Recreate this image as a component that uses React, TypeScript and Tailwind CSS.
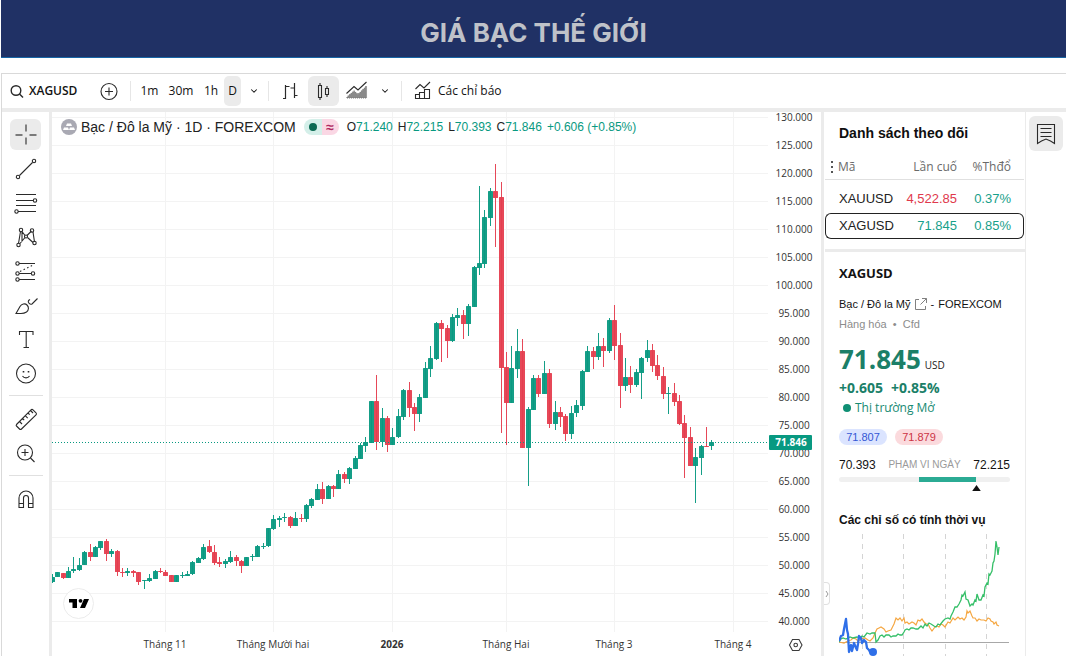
import type { ReactNode } from "react";
import clsx from "clsx";
import { ChevronDown } from "lucide-react";

const UP = "#089981";
const DOWN = "#e53e4f";

// [direction, high, body top, body bottom, low] on the pane's y scale
type Candle = [0 | 1, number, number, number, number];

const candles: Candle[] = [
    [1, 574, 577, 582, 583], [1, 572, 572, 577, 577], [0, 573, 573, 578, 579], [1, 567, 571, 578, 578],
    [1, 557, 569, 571, 573], [1, 558, 565, 570, 571], [1, 551, 552, 565, 565], [0, 544, 552, 557, 561],
    [1, 546, 547, 557, 557], [1, 541, 541, 548, 550], [0, 539, 541, 554, 561], [1, 549, 551, 554, 557],
    [0, 550, 551, 572, 576], [0, 568, 572, 573, 577], [1, 568, 571, 573, 576], [0, 570, 571, 573, 577],
    [0, 572, 572, 582, 585], [1, 580, 580, 581, 589], [1, 574, 578, 581, 582], [1, 570, 571, 579, 579],
    [0, 568, 571, 572, 573], [0, 570, 572, 576, 576], [0, 575, 575, 582, 582], [1, 575, 575, 582, 582],
    [1, 572, 575, 576, 578], [1, 571, 574, 576, 576], [1, 561, 562, 574, 575], [1, 557, 558, 563, 563],
    [1, 544, 547, 559, 560], [0, 540, 546, 552, 553], [0, 545, 552, 563, 565], [0, 557, 562, 564, 567],
    [1, 559, 561, 564, 568], [1, 551, 557, 562, 563], [0, 555, 557, 561, 566], [0, 560, 561, 566, 573],
    [1, 557, 557, 566, 566], [1, 554, 556, 557, 561], [1, 545, 546, 557, 557], [1, 543, 546, 547, 549],
    [1, 528, 528, 546, 547], [1, 515, 519, 529, 530], [1, 516, 518, 520, 527], [1, 513, 517, 518, 522],
    [0, 516, 517, 526, 528], [1, 512, 518, 526, 526], [0, 514, 518, 519, 522], [1, 504, 505, 519, 522],
    [1, 498, 499, 506, 508], [1, 484, 489, 500, 500], [0, 482, 489, 499, 504], [1, 485, 486, 499, 499],
    [0, 485, 486, 489, 497], [1, 470, 474, 489, 489], [0, 472, 474, 479, 483], [1, 467, 468, 479, 484],
    [1, 456, 458, 469, 469], [1, 443, 445, 459, 459], [1, 437, 442, 446, 452], [1, 401, 401, 443, 443],
    [0, 375, 401, 442, 450], [1, 408, 418, 442, 447], [0, 416, 418, 445, 452], [1, 428, 437, 445, 445],
    [1, 409, 416, 437, 438], [1, 389, 390, 417, 420], [0, 382, 390, 408, 417], [0, 403, 407, 414, 431],
    [1, 394, 397, 414, 422], [1, 362, 368, 398, 398], [1, 346, 358, 369, 377], [1, 322, 323, 359, 360],
    [0, 320, 323, 329, 362], [0, 325, 328, 341, 358], [1, 314, 317, 341, 342], [1, 308, 315, 318, 326],
    [0, 310, 315, 324, 339], [1, 304, 306, 324, 336], [1, 266, 267, 307, 307], [1, 186, 263, 268, 275],
    [1, 210, 217, 264, 268], [1, 188, 191, 218, 226], [0, 164, 191, 198, 247], [0, 182, 197, 368, 433],
    [0, 352, 367, 403, 445], [1, 346, 368, 403, 403], [1, 329, 351, 369, 378], [0, 339, 351, 448, 448],
    [1, 407, 409, 448, 486], [1, 375, 378, 410, 410], [0, 375, 378, 394, 397], [1, 361, 373, 394, 394],
    [0, 369, 373, 424, 428], [1, 401, 412, 424, 430], [0, 407, 412, 417, 427], [0, 414, 416, 434, 441],
    [1, 406, 413, 434, 439], [1, 400, 405, 413, 417], [1, 370, 371, 406, 410], [1, 346, 351, 372, 372],
    [0, 347, 351, 357, 369], [1, 333, 346, 357, 360], [0, 338, 346, 351, 367], [1, 318, 320, 351, 353],
    [0, 305, 320, 346, 360], [0, 333, 345, 386, 408], [1, 358, 377, 386, 391], [0, 366, 377, 385, 393],
    [1, 369, 372, 385, 387], [1, 357, 358, 373, 399], [1, 340, 350, 358, 362], [0, 344, 350, 366, 372],
    [0, 355, 365, 376, 380], [0, 367, 376, 394, 399], [1, 387, 393, 394, 414], [0, 383, 393, 402, 406],
    [0, 395, 401, 424, 425], [0, 415, 423, 438, 478], [0, 427, 437, 466, 466], [1, 448, 457, 466, 503],
    [1, 445, 446, 458, 475], [0, 427, 446, 447, 447], [1, 440, 442, 446, 450],
];

const months = [
    { label: "Tháng 11", x: 165 },
    { label: "Tháng Mười hai", x: 273 },
    { label: "2026", x: 392, bold: true },
    { label: "Tháng Hai", x: 506 },
    { label: "Tháng 3", x: 614 },
    { label: "Tháng 4", x: 733 },
];

const prices = Array.from({ length: 19 }, (_, i) => 130 - i * 5);
const priceY = (p: number) => 117 + Math.round((130 - p) * 5.6);

function PriceChart() {
    return (
        <svg
            viewBox="52 112 769 544"
            preserveAspectRatio="xMaxYMin slice"
            className="block h-[544px] w-full font-['Open_Sans',sans-serif] text-[10px]"
            role="img"
            aria-label="XAGUSD 1D"
        >
            <g stroke="#f3f3f3" shapeRendering="crispEdges">
                {prices.map((p) => (
                    <line key={p} x1={52} x2={768} y1={priceY(p) + 0.5} y2={priceY(p) + 0.5} />
                ))}
                {months.map((m) => (
                    <line key={m.label} x1={m.x + 0.5} x2={m.x + 0.5} y1={112} y2={632} />
                ))}
            </g>
            {candles.map(([up, high, top, bottom, low], i) => {
                const x = Math.floor(52.3 + i * 5.407);
                return (
                    <g key={i} fill={up ? UP : DOWN} fillOpacity={0.95}>
                        <rect x={x} y={high} width={1} height={low - high} shapeRendering="crispEdges" />
                        <rect x={x - 2} y={top} width={5} height={bottom - top} rx={0.5} />
                    </g>
                );
            })}
            <line x1={52} x2={768} y1={442.5} y2={442.5} stroke={UP} strokeDasharray="1 2" />

            {/* Price scale */}
            <g fill="#333" textAnchor="middle">
                {prices.map((p) => (
                    <text key={p} x={794} y={priceY(p) + 4}>{p.toFixed(3)}</text>
                ))}
            </g>
            <rect x={769} y={435} width={43} height={15} rx={1} fill={UP} />
            <text x={791} y={446} fill="#fff" fontWeight={700} textAnchor="middle">71.846</text>

            {/* Time scale */}
            <g fill="#333" textAnchor="middle">
                {months.map((m) => (
                    <text key={m.label} x={m.x} y={648} fontWeight={m.bold ? 700 : 400}>{m.label}</text>
                ))}
            </g>
            <g fill="none" stroke="#3c3c3c" strokeWidth={1.1}>
                <path d="M792.5 639.5h6.5l3 5.5-3 5.5h-6.5l-3-5.5z" />
                <circle cx={795.7} cy={645} r={1.8} />
            </g>

            <circle cx={78.5} cy={603.5} r={15} fill="#fff" stroke="#ececec" />
            <path d="M69 599h8v9h-4.5v-5.500h-3.500zM84 599h5l-4 9h-5z" fill="#000" />
            <circle cx={80.500} cy={600.800} r={1.900} fill="#000" />
        </svg>
    );
}

const seasons = {
    y2024:
        "839,642 844,643 848,641 851,640 853,638 856,639 858,641 861,639 865,638 868,640 870,641 873,638 875,633 877,629 879,628 881,627 884,629 886,632 888,631 891,630 893,626 894,624 896,618 898,620 900,618 902,621 904,618 905,623 907,622 909,624 912,622 914,623 916,625 918,620 920,621 922,619 924,622 926,624 928,624 930,628 932,631 935,627 937,626 939,627 941,624 943,625 945,627 948,622 950,623 953,618 955,620 958,617 960,619 962,618 964,620 966,617 967,611 968,613 970,611 972,616 973,618 975,618 977,621 979,619 981,620 984,620 986,621 988,618 990,619 991,621 993,622 994,624 996,622 997,625 999,626",
    y2025:
        "839,642 841,639 843,638 846,639 850,637 853,638 857,637 860,638 862,636 864,637 867,633 870,634 872,633 875,633 876,642 878,640 880,636 882,635 884,637 886,635 889,635 891,637 893,636 896,636 898,634 900,635 902,635 904,632 905,630 907,629 909,630 911,628 913,628 916,629 918,629 921,626 923,628 925,624 927,626 929,623 931,624 934,626 936,627 938,624 940,625 943,621 945,619 948,618 950,619 951,616 953,612 955,607 957,607 959,604 961,600 962,595 963,596 965,592 966,599 968,600 970,606 972,604 973,605 975,600 976,601 977,594 979,600 981,600 983,595 984,596 985,587 987,583 988,584 989,574 990,575 992,571 993,563 994,561 995,554 996,541 997,547 998,555 999,547",
    y2026:
        "839,641 841,636 843,635 844,629 846,619 847,630 848,634 849,652 851,645 852,651 854,643 856,648 857,650 858,644 859,636 861,638 862,643 864,640 866,642 867,648 869,650 870,652 873,652",
};

function SeasonalChart() {
    return (
        <svg viewBox="839 532 171 124" preserveAspectRatio="xMinYMin meet" className="block w-full" role="img" aria-label="Các chỉ số có tính thời vụ" fill="none">
            <path d="M862.500 534V656M903.500 534V656M945.500 534V656M986.500 534V656" stroke="#d4d4d4" strokeDasharray="5 5" />
            <path d="M839 642.500H1009" stroke="#a8a8a8" />
            <polyline points={seasons.y2024} stroke="#f5a742" strokeWidth={1.2} />
            <polyline points={seasons.y2025} stroke="#35bf68" strokeWidth={1.3} />
            <polyline points={seasons.y2026} stroke="#2f6fe8" strokeWidth={2.3} strokeLinejoin="round" />
            <circle cx={873} cy={652} r={4} fill="#2f6fe8" />
        </svg>
    );
}

function Glyph({ children, size = 24 }: { children: ReactNode; size?: number }) {
    return (
        <svg width={size} height={size} viewBox={`0 0 ${size} ${size}`} fill="none" stroke="#2a2a2a" strokeWidth={1.1} aria-hidden="true">
            {children}
        </svg>
    );
}

const tools: { name: string; icon: ReactNode; divider?: boolean }[] = [
    {
        name: "Con trỏ",
        icon: <path d="M12 1.500v7M12 14.500v7M1.500 12h7M15.500 12h7" strokeWidth="1.400" stroke="#555" />,
    },
    {
        name: "Đường xu hướng",
        icon: (
            <>
                <path d="M5.500 18.500 18.500 5.500" />
                <circle cx={4} cy={20} r={1.700} />
                <circle cx={20} cy={4} r={1.700} />
            </>
        ),
    },
    {
        name: "Fibonacci",
        icon: (
            <>
                <path d="M2 3.500h20M2 9.500h17M2 14.500h20M4 20.500h18" />
                <circle cx={21} cy={9.500} r={1.700} />
                <circle cx={2.500} cy={20.500} r={1.700} />
            </>
        ),
    },
    {
        name: "Mẫu hình",
        icon: (
            <>
                <path d="M4.500 18.500 6.500 6.500M8 6.500l3 4M13 10.500l4.500-4.500M19 7l1.500 10M6 18.500l5-6M13.500 12.500l5.500 5M8 7l0 10" />
                <circle cx={7} cy={5} r={1.700} />
                <circle cx={18} cy={5.500} r={1.700} />
                <circle cx={12} cy={11.500} r={1.500} />
                <circle cx={4.500} cy={20} r={1.700} />
                <circle cx={20.500} cy={18} r={1.700} />
            </>
        ),
    },
    {
        name: "Dự báo",
        icon: (
            <>
                <path d="M5 4.500h16M5 14.500h12M5 20.500h16" />
                <path d="M6 12.500 20 5.500" strokeDasharray="1.500 2.500" />
                <circle cx={3.500} cy={4.500} r={1.700} />
                <circle cx={3.500} cy={14.500} r={1.700} />
                <circle cx={19} cy={14.500} r={1.700} />
                <circle cx={3.500} cy={20.500} r={1.700} />
            </>
        ),
    },
    {
        name: "Cọ vẽ",
        icon: <path d="M2 20.500 6 13.500c1.500-2.500 5-3.500 7-1.500s2 5-.5 7c-1.500 1-3.500 1.500-5.500 1.500zM14.500 7.500c-1 2 1.500 4.500 3.500 3.500L23.500 5.500M14.500 7.500l1.500-1" />,
    },
    {
        name: "Văn bản",
        icon: <path d="M5.500 8V4.500h13.500V8M12.200 4.500v16M9.500 20.500h5.500" />,
    },
    {
        name: "Biểu tượng",
        icon: (
            <>
                <circle cx={12} cy={12.500} r={9.500} />
                <path d="M8.500 15c1.500 2.500 5.500 2.500 7 0" />
                <path d="M9.500 10v1.500M14.500 10v1.500" strokeWidth="1.600" />
            </>
        ),
    },
    {
        name: "Đo lường",
        divider: true,
        icon: (
            <path d="M2.500 17.500 17 2.800q1-1 2 0l3 3q1 1 0 2L7.500 22q-1 1-2 0l-3-3q-.7-.7 0-1.500zM5.500 14.500l2.500 2.500M8.500 11.500l1.700 1.700M11.200 8.700l2.500 2.500M14 6l1.700 1.700M16.500 3.500l2.500 2.500" />
        ),
    },
    {
        name: "Phóng to",
        icon: (
            <>
                <circle cx={11} cy={11.500} r={7.500} />
                <path d="M7.500 11.500h7M11 8v7M16.500 17l4 4" />
            </>
        ),
    },
    {
        name: "Nam châm",
        divider: true,
        icon: <path d="M5 20.500V11a7 7 0 0 1 14 0v9.500h-4.500V11a2.500 2.500 0 0 0-5 0v9.500zM5 16.500h4.500M14.500 16.500h4.500" />,
    },
];

function DrawingBar() {
    return (
        <div className="flex w-[47px] shrink-0 flex-col items-center gap-[3px] pt-[7px]">
            {tools.map((tool, i) => (
                <div key={tool.name} className="flex flex-col items-center">
                    {tool.divider && <div className="mt-1 mb-[7px] h-px w-[34px] bg-[#e0e0e0]" />}
                    <button
                        aria-label={tool.name}
                        className={clsx("flex h-[31px] w-[31px] items-center justify-center rounded-md", i === 0 && "bg-[#ebebeb]")}
                    >
                        <Glyph>{tool.icon}</Glyph>
                    </button>
                </div>
            ))}
        </div>
    );
}

function Divider() {
    return <div className="h-5 w-px shrink-0 bg-[#e6e6e6]" />;
}

function TopBar() {
    return (
        <div className="flex h-[34px] items-center font-['Open_Sans',sans-serif] text-xs text-[#131313]">
            <button className="ml-[7px] flex w-[88px] items-center gap-1 font-semibold">
                <Glyph size={16}>
                    <circle cx={7} cy={7.500} r={4.800} strokeWidth="1.400" />
                    <path d="m10.500 11 3.500 3.500" strokeWidth="1.400" />
                </Glyph>
                XAGUSD
            </button>
            <button aria-label="Thêm mã" className="mr-[9px] flex w-6 justify-center">
                <Glyph size={20}>
                    <circle cx={10} cy={10.500} r={8} />
                    <path d="M6 10.500h8M10 6.500v8" />
                </Glyph>
            </button>
            <Divider />
            <button className="ml-[9px] w-[19px]">1m</button>
            <button className="ml-2 w-7">30m</button>
            <button className="ml-[7px] w-[18px]">1h</button>
            <button className="ml-1 h-[30px] w-[17px] rounded-[5px] bg-[#ebebeb]">D</button>
            <button aria-label="Khung thời gian" className="mr-[9px] ml-[7px] flex w-[11px] justify-center">
                <ChevronDown size={10} strokeWidth={2.5} />
            </button>
            <Divider />
            <button aria-label="Thanh" className="mr-[5px] ml-[7px] flex w-[27px] justify-center">
                <Glyph size={20}>
                    <path d="M5.500 4v14M3 17.500h2.500M5.500 5.500h4M14.500 2v15M10.500 7h4M14.500 14.500h3" strokeWidth="1.200" />
                </Glyph>
            </button>
            <button aria-label="Nến" className="flex h-[30px] w-[31px] items-center justify-center rounded-md bg-[#ebebeb]">
                <Glyph size={20}>
                    <path d="M4.500 4.500h3v12h-3zM6 2v2.500M6 16.500v2.500M11.500 7.500h3v6h-3zM13 5v2.500M13 13.500v2.500" />
                </Glyph>
            </button>
            <button aria-label="Vùng" className="ml-[6px] flex">
                <Glyph size={24}>
                    <path d="M1.500 14.500 9 7.500l4 3.500 8.500-8" />
                    <path d="M2 19v-1l7-6 4 3.500 8.500-8.500v12z" fill="#8a8a8a" stroke="#777" strokeDasharray="1 1" />
                </Glyph>
            </button>
            <button aria-label="Kiểu biểu đồ" className="mx-[9px] flex w-[14px] justify-center">
                <ChevronDown size={10} strokeWidth={2.5} />
            </button>
            <Divider />
            <button className="ml-[10px] flex items-center gap-1">
                <Glyph size={22}>
                    <path d="M3.500 9 8 4.500l4 3.500 6-6M3.500 18.500v-4h4v4zM7.500 18.500v-6h5v6zM12.500 18.500V9.500h5v9z" />
                </Glyph>
                Các chỉ báo
            </button>
        </div>
    );
}

const quote = [
    ["O", "71.240"],
    ["H", "72.215"],
    ["L", "70.393"],
    ["C", "71.846"],
];

function Legend() {
    return (
        <div className="absolute top-[7px] left-[9px] flex items-center whitespace-nowrap text-xs text-[#222]">
            <svg width={16} height={16} viewBox="0 0 16 16" aria-hidden="true">
                <circle cx={8} cy={8} r={8} fill="#a9a9b3" />
                <path d="M6 4.500h4l1 2.500H5zM3 8.500h4L8 11H2zM9 8.500h4L14 11H8z" fill="#fff" />
            </svg>
            <span className="ml-1 text-sm leading-4">Bạc / Đô la Mỹ · 1D · FOREXCOM</span>
            <span className="ml-2 flex h-4 w-[35px] items-center overflow-hidden rounded-full">
                <span className="flex h-4 w-[18px] items-center justify-center bg-[#d4efe9]">
                    <span className="h-2 w-2 rounded-full bg-[#0a6a53]" />
                </span>
                <span className="flex h-4 flex-1 items-center justify-center bg-[#fad7e4] text-sm leading-4 font-bold text-[#b02a62]">≈</span>
            </span>
            <span className="ml-2 flex gap-[5px]">
                {quote.map(([key, value]) => (
                    <span key={key}>
                        {key}
                        <span className="text-[#089981]">{value}</span>
                    </span>
                ))}
                <span className="text-[#089981]">+0.606 (+0.85%)</span>
            </span>
        </div>
    );
}

function Watchlist() {
    const selected = "border-y border-[#222]";

    return (
        <section className="h-[137px] pt-[11px] pr-px">
            <h2 className="pl-[14px] text-sm leading-5 font-bold text-[#0f0f0f]">Danh sách theo dõi</h2>
            <table className="mt-[11px] w-full table-fixed border-separate border-spacing-0 text-[13px]">
                <thead className="font-['Open_Sans',sans-serif] text-xs text-[#6a6a6a]">
                    <tr className="h-[26px]">
                        <th className="w-[76px] border-b border-[#e0e0e0] text-left font-normal">
                            <span className="flex items-center gap-1 pl-[5px]">
                                <svg width={4} height={12} viewBox="0 0 4 12" fill="#555" aria-hidden="true">
                                    <path d="M1 0h2v2H1zM1 5h2v2H1zM1 10h2v2H1z" />
                                </svg>
                                Mã
                            </span>
                        </th>
                        <th className="border-b border-[#e0e0e0] text-right font-normal">Lần cuố</th>
                        <th className="w-[67px] border-b border-[#e0e0e0] pr-[13px] text-right font-normal">%Thđổ</th>
                    </tr>
                </thead>
                <tbody className="text-[#222]">
                    <tr className="h-[33px]">
                        <td className="pt-1 pl-[14px]">XAUUSD</td>
                        <td className="pt-1 text-right text-[#e0394c]">4,522.85</td>
                        <td className="pt-1 pr-[13px] text-right text-[#17a08a]">0.37%</td>
                    </tr>
                    <tr className="h-[26px]">
                        <td className={clsx(selected, "rounded-l-md border-l pl-[13px]")}>XAGUSD</td>
                        <td className={clsx(selected, "text-right text-[#17a08a]")}>71.845</td>
                        <td className={clsx(selected, "rounded-r-md border-r pr-3 text-right text-[#17a08a]")}>0.85%</td>
                    </tr>
                </tbody>
            </table>
        </section>
    );
}

function SymbolDetails() {
    return (
        <section className="border-t-[3px] border-[#ebebeb] pt-[11px] pr-[15px] pl-[14px] text-[#131313]">
            <h2 className="font-['Open_Sans',sans-serif] text-[13px] leading-5 font-bold">XAGUSD</h2>
            <div className="mt-[13px] flex items-center gap-1 text-[11px] leading-4 whitespace-nowrap">
                <span>Bạc / Đô la Mỹ</span>
                <a href="#symbol" aria-label="Mở trang mã">
                    <svg width={12} height={12} viewBox="0 0 12 12" fill="none" stroke="#808080" aria-hidden="true">
                        <path d="M4 1.500H.5v10h10V8M7 .5h4.500V5M11.500.5 5.500 6.500" />
                    </svg>
                </a>
                <span>-</span>
                <span>FOREXCOM</span>
            </div>
            <p className="mt-1 text-[11px] leading-4 text-[#8c8c8c]">Hàng hóa&nbsp; •&nbsp; Cfd</p>
            <div className="mt-3 font-['Open_Sans',sans-serif]">
                <p className="flex items-baseline gap-1 text-[26px] leading-[30px] font-bold text-[#1b7f68]">
                    71.845
                    <span className="text-[10px] font-normal text-[#222]">USD</span>
                </p>
                <p className="flex gap-2 text-sm leading-4 font-bold text-[#1b7f68]">
                    <span>+0.605</span>
                    <span>+0.85%</span>
                </p>
                <p className="mt-1 flex items-center gap-1 pl-1 text-xs leading-4 text-[#178a72]">
                    <span className="h-2 w-2 rounded-full bg-[#0f8f74]" />
                    Thị trường Mở
                </p>
            </div>
            <div className="mt-[13px] flex gap-2 text-[11px] leading-4">
                <span className="w-12 rounded-full bg-[#dbe4ff] text-center text-[#3457d5]">71.807</span>
                <span className="w-12 rounded-full bg-[#fbdadd] text-center text-[#cc3344]">71.879</span>
            </div>
            <div className="mt-3 flex items-center justify-between text-xs leading-4">
                <span>70.393</span>
                <span className="text-[10px] text-[#9a9a9a]">PHẠM VI NGÀY</span>
                <span>72.215</span>
            </div>
            <div className="mt-1 h-[5px] rounded-full bg-[#f0f0f0]">
                <div className="ml-[47%] h-[5px] w-[33%] bg-[#2bab94]" />
            </div>
            <svg viewBox="0 0 10 7" className="mt-[3px] ml-[78%] block h-[6px] w-[9px]" aria-hidden="true">
                <path d="M5 0 10 7H0z" fill="#111" />
            </svg>
            <h3 className="mt-[21px] mb-1 text-xs leading-4 font-bold whitespace-nowrap">Các chỉ số có tính thời vụ</h3>
            <SeasonalChart />
        </section>
    );
}

export default function App() {
    return (
        <div className="overflow-hidden bg-white pl-px font-['Liberation_Sans',Arial,sans-serif]">
            <header className="flex h-[58px] items-center justify-center border-b border-[#1766a6] bg-[#203165] pt-2">
                <h1 className="font-['Inter',sans-serif] text-[26px] leading-8 font-bold text-[#bfc2c9]">GIÁ BẠC THẾ GIỚI</h1>
            </header>
            <main className="mt-[15px] border-t border-l border-[#d9d9d9]">
                <TopBar />
                <div className="flex border-t-4 border-[#ebebeb]">
                    <DrawingBar />
                    <div className="relative min-w-0 flex-1 border-l-[3px] border-[#ebebeb]">
                        <PriceChart />
                        <Legend />
                    </div>
                    <aside className="relative w-[205px] shrink-0 border-r border-l-[3px] border-[#ebebeb] pl-px">
                        <Watchlist />
                        <SymbolDetails />
                        <button aria-label="Thu gọn" className="absolute top-[470px] left-0 flex h-[23px] w-[6px] items-center justify-center rounded-r-sm border border-l-0 border-[#e0e0e0] bg-white">
                            <svg width={4} height={8} viewBox="0 0 4 8" fill="none" stroke="#999" aria-hidden="true">
                                <path d="m1 1 2 3-2 3" />
                            </svg>
                        </button>
                    </aside>
                    <div className="w-10 shrink-0 pt-1 pl-[3px]">
                        <button aria-label="Danh sách theo dõi" className="flex h-[35px] w-[34px] items-center justify-center rounded-md bg-[#ebebeb]">
                            <Glyph size={24}>
                                <path d="M3.500 2.500h17v19l-4-2.500-4.500-2-4.500 2-4 2.500zM6.500 6.500h11M6.500 10.500h11M6.500 14.500h11" />
                            </Glyph>
                        </button>
                    </div>
                </div>
            </main>
        </div>
    );
}
